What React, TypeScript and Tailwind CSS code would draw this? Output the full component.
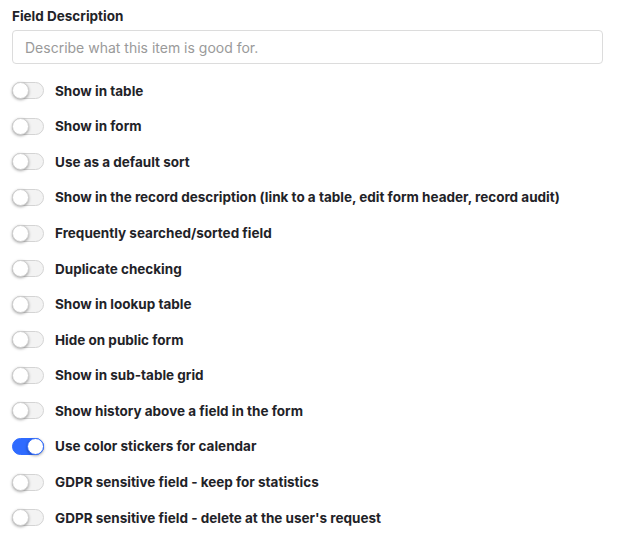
import React, { useState } from "react";

const items = [
  "Show in table",
  "Show in form",
  "Use as a default sort",
  "Show in the record description (link to a table, edit form header, record audit)",
  "Frequently searched/sorted field",
  "Duplicate checking",
  "Show in lookup table",
  "Hide on public form",
  "Show in sub-table grid",
  "Show history above a field in the form",
  "Use color stickers for calendar",
  "GDPR sensitive field - keep for statistics",
  "GDPR sensitive field - delete at the user's request",
];

function Toggle({ on, onClick }: { on: boolean; onClick: () => void }) {
  return (
    <button
      onClick={onClick}
      className={`relative flex h-[17px] w-[32px] shrink-0 items-center rounded-full border ${
        on ? "border-[#2f6bff] bg-[#2f6bff]" : "border-[#d4d4d4] bg-[#f3f3f3]"
      }`}
    >
      <span
        className={`absolute top-[-1px] h-[17px] w-[17px] rounded-full border bg-white shadow-[0_1px_3px_rgba(0,0,0,0.35)] ${
          on ? "left-[14px] border-[#2f6bff]" : "left-[-1px] border-[#cfcfcf]"
        }`}
      />
    </button>
  );
}

export default function App() {
  const [state, setState] = useState<boolean[]>(items.map((_, i) => i === 10));
  return (
    <div
      className="bg-white px-[12px] pt-[7px] text-[#1f2328]"
      style={{ fontFamily: "Inter, 'Noto Sans', sans-serif" }}
    >
      <div className="text-[13.5px] font-bold leading-[18px]">Field Description</div>
      <input
        className="mt-[5px] block h-[34px] w-[591px] rounded-[4px] border border-[#dcdcdc] px-[12px] text-[14px] outline-none placeholder:text-[#9a9a9a]"
        placeholder="Describe what this item is good for."
      />
      <div className="mt-[9px] flex flex-col">
        {items.map((t, i) => (
          <div key={t} className="flex h-[35.58px] items-center gap-[11px]">
            <Toggle
              on={state[i]}
              onClick={() => setState(s => s.map((v, j) => (j === i ? !v : v)))}
            />
            <span className="text-[13.5px] font-bold">{t}</span>
          </div>
        ))}
      </div>
    </div>
  );
}
